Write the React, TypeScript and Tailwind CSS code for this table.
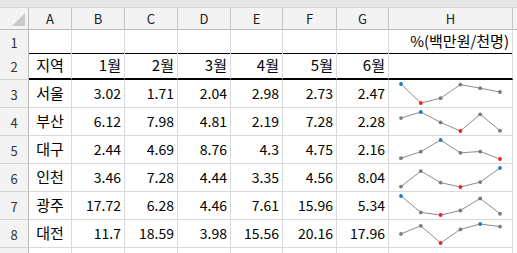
import React from "react";

const font = { fontFamily: '"Noto Sans CJK KR", "Noto Sans", sans-serif' };

const cols = "grid grid-cols-[29px_43px_53px_53px_53px_52px_54px_52px_124px_4px]";

const data: { name: string; v: number[] }[] = [
  { name: "서울", v: [3.02, 1.71, 2.04, 2.98, 2.73, 2.47] },
  { name: "부산", v: [6.12, 7.98, 4.81, 2.19, 7.28, 2.28] },
  { name: "대구", v: [2.44, 4.69, 8.76, 4.3, 4.75, 2.16] },
  { name: "인천", v: [3.46, 7.28, 4.44, 3.35, 4.56, 8.04] },
  { name: "광주", v: [17.72, 6.28, 4.46, 7.61, 15.96, 5.34] },
  { name: "대전", v: [11.7, 18.59, 3.98, 15.56, 20.16, 17.96] },
];

function Spark({ v }: { v: number[] }) {
  const max = Math.max(...v);
  const min = Math.min(...v);
  const pts = v.map((val, i) => ({
    x: 12 + i * 19.8,
    y: 4 + ((max - val) / (max - min)) * 19,
    val,
  }));
  const d = pts.map((p, i) => `${i === 0 ? "M" : "L"}${p.x.toFixed(1)},${p.y.toFixed(1)}`).join(" ");
  return (
    <svg width="123" height="27" className="block">
      <path d={d} fill="none" stroke="#8c8c8c" strokeWidth="1" />
      {pts.map((p, i) => (
        <circle
          key={i}
          cx={p.x}
          cy={p.y}
          r={1.9}
          fill={p.val === max ? "#1f77d0" : p.val === min ? "#ff1a1a" : "#7a7a7a"}
        />
      ))}
    </svg>
  );
}

function RowHead({ n }: { n: string }) {
  return (
    <div className="flex items-center justify-center bg-[#f3f3f3] border-r border-r-[#bcbcbc] border-b border-b-[#d6d6d6] text-[13px] text-[#333] pt-[2px]">
      {n}
    </div>
  );
}

export default function App() {
  const headers = ["A", "B", "C", "D", "E", "F", "G", "H"];
  const cell = "border-r border-r-[#dadada] flex items-center";
  return (
    <div className="w-[517px] h-[253px] overflow-hidden bg-white text-black" style={font}>
      <div className="h-[8px] bg-[#e6e6e6] border-b border-b-[#d6d6d6]" />
      {/* column header */}
      <div className={`${cols} h-[22px]`}>
        <div className="relative bg-[#f3f3f3] border-r border-r-[#bcbcbc] border-b border-b-[#bcbcbc]">
          <div className="absolute right-[3px] bottom-[3px] w-0 h-0 border-l-[13px] border-l-transparent border-b-[13px] border-b-[#c9c9c9]" />
        </div>
        {headers.map((h) => (
          <div
            key={h}
            className="flex items-center justify-center bg-[#f3f3f3] border-r border-r-[#c6c6c6] border-b border-b-[#bcbcbc] text-[13px] text-[#222]"
          >
            {h}
          </div>
        ))}
        <div className="bg-[#f3f3f3] border-b border-b-[#bcbcbc]" />
      </div>
      {/* row 1 */}
      <div className={`${cols} h-[22px]`}>
        <RowHead n="1" />
        {headers.slice(0, 7).map((h) => (
          <div key={h} className={`${cell} border-b border-b-black`} />
        ))}
        <div className={`${cell} border-b border-b-black justify-end pr-[3px] text-[15px] whitespace-nowrap`}>
          %(백만원/천명)
        </div>
        <div />
      </div>
      {/* row 2 */}
      <div className={`${cols} h-[28px]`}>
        <RowHead n="2" />
        <div className={`${cell} border-b-2 border-b-black justify-center text-[15px]`}>지역</div>
        {["1월", "2월", "3월", "4월", "5월", "6월"].map((m) => (
          <div key={m} className={`${cell} border-b-2 border-b-black justify-end pr-[3px] text-[15px]`}>
            {m}
          </div>
        ))}
        <div className={`${cell} border-b-2 border-b-black`} />
        <div />
      </div>
      {data.map((r, idx) => (
        <div key={r.name} className={`${cols} h-[28px]`}>
          <RowHead n={String(idx + 3)} />
          <div className={`${cell} border-b border-b-[#dadada] justify-center text-[15px]`}>{r.name}</div>
          {r.v.map((val, i) => (
            <div key={i} className={`${cell} border-b border-b-[#dadada] justify-end pr-[3px] text-[14px]`}>
              {String(val)}
            </div>
          ))}
          <div className="border-r border-r-[#dadada] border-b border-b-[#dadada]">
            <Spark v={r.v} />
          </div>
          <div />
        </div>
      ))}
      <div className={`${cols} h-[28px]`}>
        <RowHead n="" />
        {headers.map((h) => (
          <div key={h} className={`${cell} border-b border-b-[#dadada]`} />
        ))}
        <div />
      </div>
    </div>
  );
}
